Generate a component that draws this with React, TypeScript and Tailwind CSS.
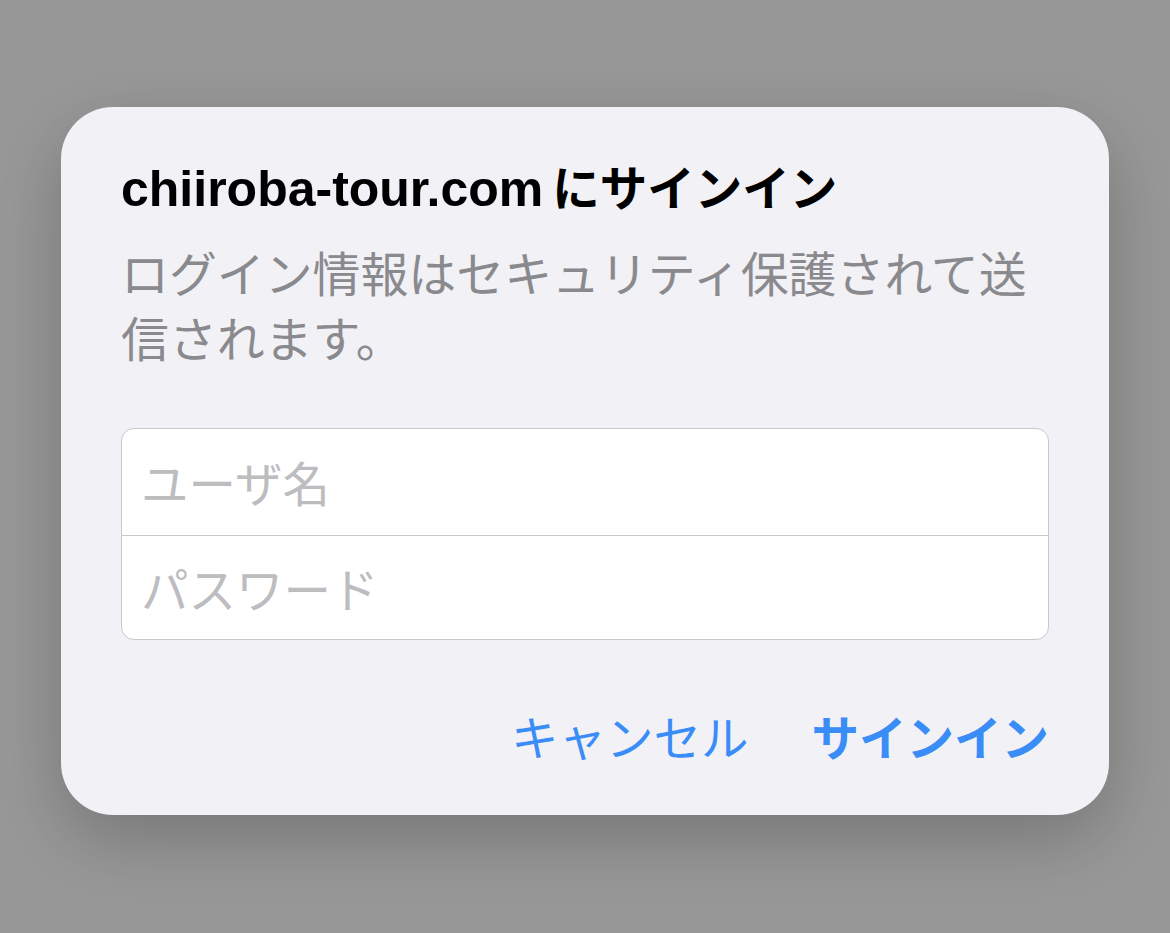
import { useState } from "react";

const jp = "font-['Noto_Sans_CJK_JP','Noto_Sans',sans-serif]";

export default function App() {
  const [user, setUser] = useState("");
  const [pass, setPass] = useState("");

  return (
    <div className="min-h-[933px] w-full bg-[#989898] pt-[107px]">
      <div className="mx-auto flex h-[708px] w-[1048px] flex-col rounded-[52px] bg-[#f1f1f6] px-[60px] pt-[49px] shadow-[0_24px_70px_rgba(0,0,0,0.22)]">
        {/* title */}
        <h1 className="flex items-baseline whitespace-nowrap text-black">
          <span className="font-['Liberation_Sans',sans-serif] text-[50px] font-bold leading-[60px]">
            chiiroba-tour.com
          </span>
          <span className={`${jp} ml-[9px] text-[47.5px] font-bold leading-[60px]`}>
            にサインイン
          </span>
        </h1>

        {/* message */}
        <p className={`${jp} mt-[20px] text-[47.9px] leading-[65px] text-[#8a8a8e]`}>
          ログイン情報はセキュリティ保護されて送信されます。
        </p>

        {/* fields */}
        <div className="mt-[59px] overflow-hidden rounded-[13px] border border-[#c9c9cc] bg-white">
          <div className="flex h-[107px] items-center border-b border-[#c9c9cc] pl-[19px]">
            <input
              value={user}
              onChange={(e) => setUser(e.target.value)}
              placeholder="ユーザ名"
              className={`${jp} w-full bg-transparent text-[47.5px] text-black outline-none placeholder:text-[#bdbdbf]`}
            />
          </div>
          <div className="flex h-[103px] items-center pl-[19px]">
            <input
              type="password"
              value={pass}
              onChange={(e) => setPass(e.target.value)}
              placeholder="パスワード"
              className={`${jp} w-full bg-transparent text-[47.5px] text-black outline-none placeholder:text-[#bdbdbf]`}
            />
          </div>
        </div>

        {/* actions */}
        <div className={`${jp} mt-[63px] flex justify-end gap-[63px] text-[47.5px] leading-[65px] text-[#3a8cf6]`}>
          <button className="cursor-pointer">キャンセル</button>
          <button className="cursor-pointer font-bold">サインイン</button>
        </div>
      </div>
    </div>
  );
}
